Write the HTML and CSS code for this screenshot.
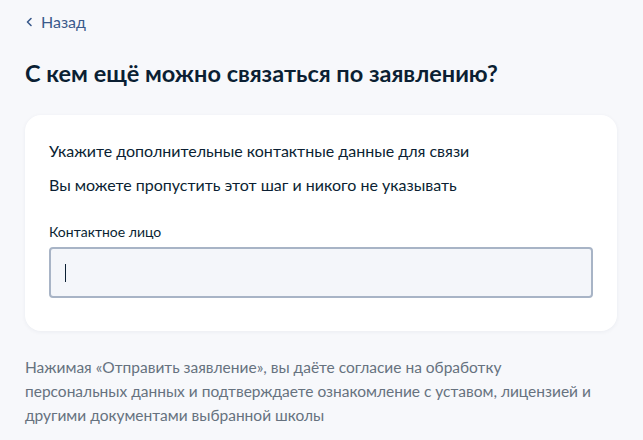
FILE: index.html
```html
<!DOCTYPE html>
<html lang="ru">
<head>
<meta charset="utf-8">
<link rel="stylesheet" href="styles.css">
</head>
<body>
<div class="page">
  <a class="back" href="#">
    <svg class="chev" width="8" height="10" viewBox="0 0 8 10"><path d="M6 1.5 L2.5 5 L6 8.5" fill="none" stroke="#0d4cd3" stroke-width="1.6" stroke-linecap="round" stroke-linejoin="round"/></svg>
    <span>Назад</span>
  </a>
  <h1 class="title">С кем ещё можно связаться по заявлению?</h1>
  <div class="card">
    <p class="text">Укажите дополнительные контактные данные для связи</p>
    <p class="text second">Вы можете пропустить этот шаг и никого не указывать</p>
    <label class="label">Контактное лицо</label>
    <div class="input"><span class="caret"></span></div>
  </div>
  <p class="note">Нажимая «Отправить заявление», вы даёте согласие на обработку<br>персональных данных и подтверждаете ознакомление с уставом, лицензией и<br>другими документами выбранной школы</p>
</div>
</body>
</html>
```
FILE: styles.css
```css
html, body {
  margin: 0;
  padding: 0;
  background: #f7f8fb;
}
.page {
  font-family: Lato, "Noto Sans", sans-serif;
  padding: 13px 26px 0 25px;
  color: #0b1f33;
}
.back {
  display: flex;
  align-items: center;
  gap: 8px;
  color: #3a5a8c;
  text-decoration: none;
  font-size: 16px;
  line-height: 18px;
  height: 18px;
}
.chev path { stroke: #3a5a8c; }
.title {
  margin: 27px 0 0;
  font-size: 23.5px;
  line-height: 30px;
  font-weight: 700;
  color: #0b1f33;
}
.card {
  margin-top: 27px;
  background: #fff;
  border-radius: 16px;
  padding: 26px 24px 33px 24px;
  box-shadow: 0 1px 4px rgba(30, 50, 90, 0.06);
}
.text {
  margin: 0;
  font-size: 16px;
  line-height: 20px;
}
.second {
  margin-top: 14px;
}
.label {
  display: block;
  margin-top: 29px;
  font-size: 14px;
  line-height: 16px;
  color: #0b1f33;
}
.input {
  margin-top: 7px;
  height: 47px;
  border: 2px solid #a8b4c6;
  border-radius: 4px;
  background: #f4f6fa;
  display: flex;
  align-items: center;
  padding-left: 14px;
}
.caret {
  width: 1px;
  height: 18px;
  background: #0b1f33;
}
.note {
  margin: 24px 0 0;
  font-size: 15.5px;
  line-height: 24px;
  color: #66727f;
  white-space: nowrap;
}
```
